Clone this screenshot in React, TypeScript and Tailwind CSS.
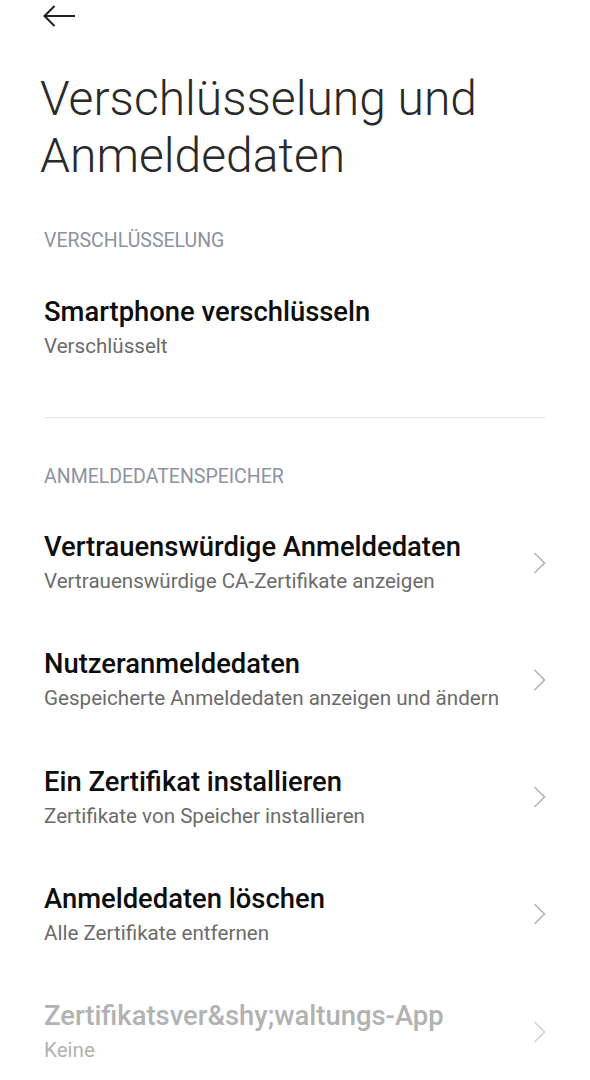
type Row = {
    title: string;
    subtitle: string;
    chevron?: boolean;
    disabled?: boolean;
};

const storageRows: Row[] = [
    { title: 'Vertrauenswürdige Anmeldedaten', subtitle: 'Vertrauenswürdige CA-Zertifikate anzeigen', chevron: true },
    { title: 'Nutzeranmeldedaten', subtitle: 'Gespeicherte Anmeldedaten anzeigen und ändern', chevron: true },
    { title: 'Ein Zertifikat installieren', subtitle: 'Zertifikate von Speicher installieren', chevron: true },
    { title: 'Anmeldedaten löschen', subtitle: 'Alle Zertifikate entfernen', chevron: true },
    { title: 'Zertifikatsver&shy;waltungs-App', subtitle: 'Keine', chevron: true, disabled: true },
];

function SectionHeader({ label }: { label: string }) {
    return (
        <div className="px-[44px] text-[19.5px] leading-[24px] text-[#8d91a1]">
            {label}
        </div>
    );
}

function Chevron({ muted }: { muted?: boolean }) {
    return (
        <svg width="13" height="22" viewBox="0 0 13 22" fill="none" className={muted ? 'text-[#cfcfcf]' : 'text-[#b5b5b5]'}>
            <path d="M1.5 1L11.5 11L1.5 21" stroke="currentColor" strokeWidth="1.6" />
        </svg>
    );
}

function SettingsRow({ row }: { row: Row }) {
    return (
        <div className="flex items-center pl-[44px] pr-[44px] py-[27px]">
            <div className="flex-1 min-w-0">
                <div
                    className={
                        row.disabled
                            ? 'text-[27.4px] leading-[33px] font-medium text-[#b2b2b2] whitespace-nowrap'
                            : 'text-[27.4px] leading-[33px] font-medium text-[#0d0d0d] whitespace-nowrap'
                    }
                >
                    {row.title}
                </div>
                <div
                    className={
                        row.disabled
                            ? 'mt-[5px] text-[20.6px] leading-[25px] text-[#b2b2b2] whitespace-nowrap'
                            : 'mt-[5px] text-[20.6px] leading-[25px] text-[#6b6b6b] whitespace-nowrap'
                    }
                >
                    {row.subtitle}
                </div>
            </div>
            {row.chevron && <Chevron muted={row.disabled} />}
        </div>
    );
}

export default function App() {
    return (
        <div
            className="w-[590px] h-[1080px] overflow-hidden bg-white"
            style={{ fontFamily: 'Roboto, "Noto Sans", sans-serif' }}
        >
            {/* Top bar */}
            <div className="h-[32px] flex items-center pl-[42px]">
                <svg width="35" height="22" viewBox="0 0 35 22" fill="none" className="text-[#222]">
                    <path d="M2.5 11H33M12.5 1L2.5 11L12.5 21" stroke="currentColor" strokeWidth="2.1" />
                </svg>
            </div>

            {/* Title */}
            <h1 className="mt-[38px] px-[40px] text-[48px] leading-[57px] font-light text-[#2a2a2a]">
                Verschlüsselung und
                <br />
                Anmeldedaten
            </h1>

            {/* Encryption section */}
            <div className="mt-[45px]">
                <SectionHeader label="VERSCHLÜSSELUNG" />
                <div className="mt-[16px]">
                    <SettingsRow row={{ title: 'Smartphone verschlüsseln', subtitle: 'Verschlüsselt' }} />
                </div>
            </div>

            <div className="mx-[44px] mt-[31px] h-px bg-[#e6e6e6]" />

            {/* Credential storage section */}
            <div className="mt-[47px]">
                <SectionHeader label="ANMELDEDATENSPEICHER" />
                <div className="mt-[15px]">
                    {storageRows.map((row) => (
                        <div key={row.title} className="mb-[0.3px]">
                            <SettingsRow row={row} />
                        </div>
                    ))}
                </div>
            </div>
        </div>
    );
}
